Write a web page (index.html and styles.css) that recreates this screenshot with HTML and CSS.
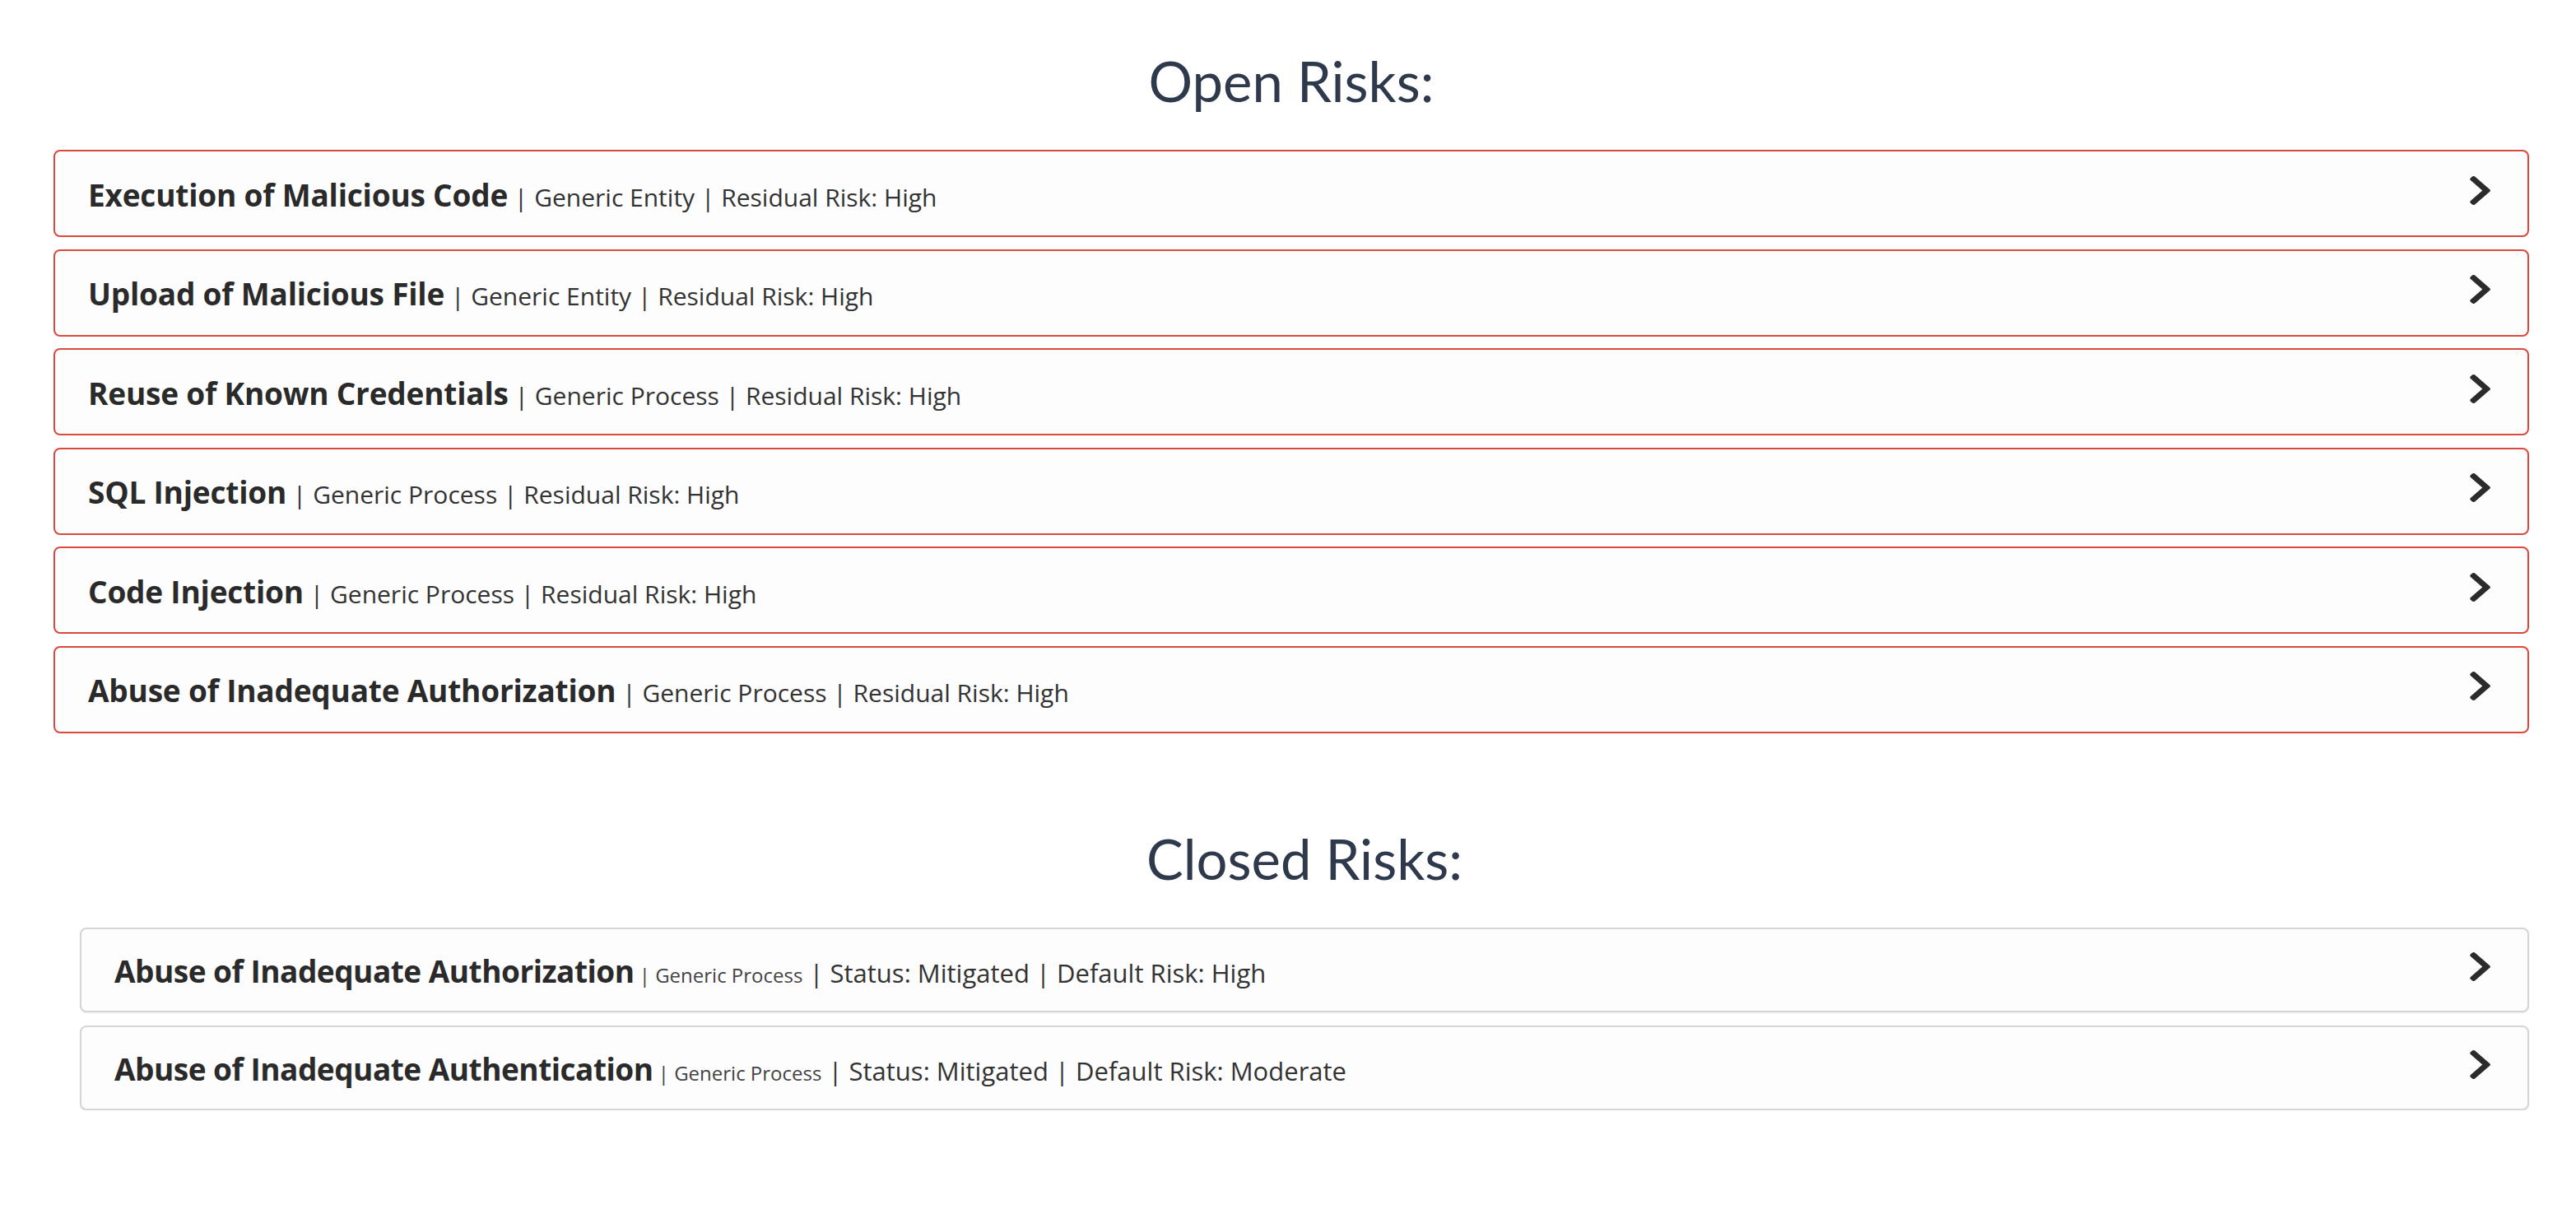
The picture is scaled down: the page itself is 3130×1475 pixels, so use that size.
FILE: index.html
```html
<!DOCTYPE html>
<html lang="en">
<head>
<meta charset="utf-8">
<title>Risks</title>
<link rel="stylesheet" href="styles.css">
</head>
<body>
<main class="page">
  <section class="risk-section">
    <h2 class="section-title">Open Risks:</h2>
    <div class="risk-list">
      <div class="risk open"><div class="risk-text"><span class="risk-name">Execution of Malicious Code</span><span class="risk-meta"> | Generic Entity | Residual Risk: High</span></div><svg class="chev" viewBox="25 38 268 436" preserveAspectRatio="none"><path d="M285.476 272.971L91.132 467.314c-9.373 9.373-24.569 9.373-33.941 0l-22.667-22.667c-9.357-9.357-9.375-24.522-.04-33.901L188.505 256 34.484 101.255c-9.335-9.379-9.317-24.544.04-33.901l22.667-22.667c9.373-9.373 24.569-9.373 33.941 0L285.475 239.03c9.373 9.372 9.373 24.568.001 33.941z"/></svg></div>
      <div class="risk open"><div class="risk-text"><span class="risk-name">Upload of Malicious File</span><span class="risk-meta"> | Generic Entity | Residual Risk: High</span></div><svg class="chev" viewBox="25 38 268 436" preserveAspectRatio="none"><path d="M285.476 272.971L91.132 467.314c-9.373 9.373-24.569 9.373-33.941 0l-22.667-22.667c-9.357-9.357-9.375-24.522-.04-33.901L188.505 256 34.484 101.255c-9.335-9.379-9.317-24.544.04-33.901l22.667-22.667c9.373-9.373 24.569-9.373 33.941 0L285.475 239.03c9.373 9.372 9.373 24.568.001 33.941z"/></svg></div>
      <div class="risk open"><div class="risk-text"><span class="risk-name">Reuse of Known Credentials</span><span class="risk-meta"> | Generic Process | Residual Risk: High</span></div><svg class="chev" viewBox="25 38 268 436" preserveAspectRatio="none"><path d="M285.476 272.971L91.132 467.314c-9.373 9.373-24.569 9.373-33.941 0l-22.667-22.667c-9.357-9.357-9.375-24.522-.04-33.901L188.505 256 34.484 101.255c-9.335-9.379-9.317-24.544.04-33.901l22.667-22.667c9.373-9.373 24.569-9.373 33.941 0L285.475 239.03c9.373 9.372 9.373 24.568.001 33.941z"/></svg></div>
      <div class="risk open"><div class="risk-text"><span class="risk-name">SQL Injection</span><span class="risk-meta"> | Generic Process | Residual Risk: High</span></div><svg class="chev" viewBox="25 38 268 436" preserveAspectRatio="none"><path d="M285.476 272.971L91.132 467.314c-9.373 9.373-24.569 9.373-33.941 0l-22.667-22.667c-9.357-9.357-9.375-24.522-.04-33.901L188.505 256 34.484 101.255c-9.335-9.379-9.317-24.544.04-33.901l22.667-22.667c9.373-9.373 24.569-9.373 33.941 0L285.475 239.03c9.373 9.372 9.373 24.568.001 33.941z"/></svg></div>
      <div class="risk open"><div class="risk-text"><span class="risk-name">Code Injection</span><span class="risk-meta"> | Generic Process | Residual Risk: High</span></div><svg class="chev" viewBox="25 38 268 436" preserveAspectRatio="none"><path d="M285.476 272.971L91.132 467.314c-9.373 9.373-24.569 9.373-33.941 0l-22.667-22.667c-9.357-9.357-9.375-24.522-.04-33.901L188.505 256 34.484 101.255c-9.335-9.379-9.317-24.544.04-33.901l22.667-22.667c9.373-9.373 24.569-9.373 33.941 0L285.475 239.03c9.373 9.372 9.373 24.568.001 33.941z"/></svg></div>
      <div class="risk open"><div class="risk-text"><span class="risk-name">Abuse of Inadequate Authorization</span><span class="risk-meta"> | Generic Process | Residual Risk: High</span></div><svg class="chev" viewBox="25 38 268 436" preserveAspectRatio="none"><path d="M285.476 272.971L91.132 467.314c-9.373 9.373-24.569 9.373-33.941 0l-22.667-22.667c-9.357-9.357-9.375-24.522-.04-33.901L188.505 256 34.484 101.255c-9.335-9.379-9.317-24.544.04-33.901l22.667-22.667c9.373-9.373 24.569-9.373 33.941 0L285.475 239.03c9.373 9.372 9.373 24.568.001 33.941z"/></svg></div>
    </div>
  </section>
  <section class="risk-section closed-section">
    <h2 class="section-title">Closed Risks:</h2>
    <div class="risk-list indented">
      <div class="risk closed"><div class="risk-text"><span class="risk-name">Abuse of Inadequate Authorization</span><span class="risk-small"> | Generic Process</span><span class="risk-meta wide"> | Status: Mitigated | Default Risk: High</span></div><svg class="chev" viewBox="25 38 268 436" preserveAspectRatio="none"><path d="M285.476 272.971L91.132 467.314c-9.373 9.373-24.569 9.373-33.941 0l-22.667-22.667c-9.357-9.357-9.375-24.522-.04-33.901L188.505 256 34.484 101.255c-9.335-9.379-9.317-24.544.04-33.901l22.667-22.667c9.373-9.373 24.569-9.373 33.941 0L285.475 239.03c9.373 9.372 9.373 24.568.001 33.941z"/></svg></div>
      <div class="risk closed"><div class="risk-text"><span class="risk-name">Abuse of Inadequate Authentication</span><span class="risk-small"> | Generic Process</span><span class="risk-meta wide"> | Status: Mitigated | Default Risk: Moderate</span></div><svg class="chev" viewBox="25 38 268 436" preserveAspectRatio="none"><path d="M285.476 272.971L91.132 467.314c-9.373 9.373-24.569 9.373-33.941 0l-22.667-22.667c-9.357-9.357-9.375-24.522-.04-33.901L188.505 256 34.484 101.255c-9.335-9.379-9.317-24.544.04-33.901l22.667-22.667c9.373-9.373 24.569-9.373 33.941 0L285.475 239.03c9.373 9.372 9.373 24.568.001 33.941z"/></svg></div>
    </div>
  </section>
</main>
</body>
</html>
```
FILE: styles.css
```css
* { box-sizing: border-box; }
html, body {
  margin: 0;
  background: #ffffff;
}
body {
  font-family: "Open Sans", "Noto Sans", sans-serif;
  color: #2b2b2b;
}
.page {
  padding: 0 57px 0 65px;
}
.section-title {
  margin: 0;
  text-align: center;
  font-family: Lato, "Open Sans", sans-serif;
  font-weight: 400;
  font-size: 67px;
  line-height: 80px;
  color: #2e3a4c;
}
.risk-section {
  padding-top: 58px;
}
.risk-section .section-title {
  margin-bottom: 44px;
}
.closed-section {
  padding-top: 112px;
}
.closed-section .section-title {
  margin-bottom: 44px;
  padding-left: 32px;
}
.risk-list {
  display: flex;
  flex-direction: column;
  gap: 14.5px;
}
.risk-list.indented {
  padding-left: 32px;
  gap: 16px;
}
.risk {
  display: flex;
  align-items: center;
  justify-content: space-between;
  height: 106px;
  padding: 0 45px 0 40px;
  border-radius: 8px;
  background: #fdfdfd;
}
.risk.open {
  border: 2px solid #d94a3d;
}
.risk.closed {
  height: 103px;
  border: 2px solid #d5d5d5;
  box-shadow: 0 1px 2px rgba(0,0,0,0.08);
}
.risk-text {
  white-space: nowrap;
  padding-top: 2px;
}
.risk-name {
  font-weight: 700;
  font-size: 37px;
  color: #2a2a2a;
  letter-spacing: -0.2px;
}
.risk.closed .risk-name {
  letter-spacing: -0.5px;
}
.risk-meta {
  font-size: 30px;
  color: #333333;
}
.risk-meta.wide {
  font-size: 31px;
}
.risk-small {
  font-size: 24px;
  color: #444444;
}
.chev {
  width: 25px;
  height: 35px;
  fill: #2b2b2b;
  margin-top: -8px;
  flex: none;
}
```
